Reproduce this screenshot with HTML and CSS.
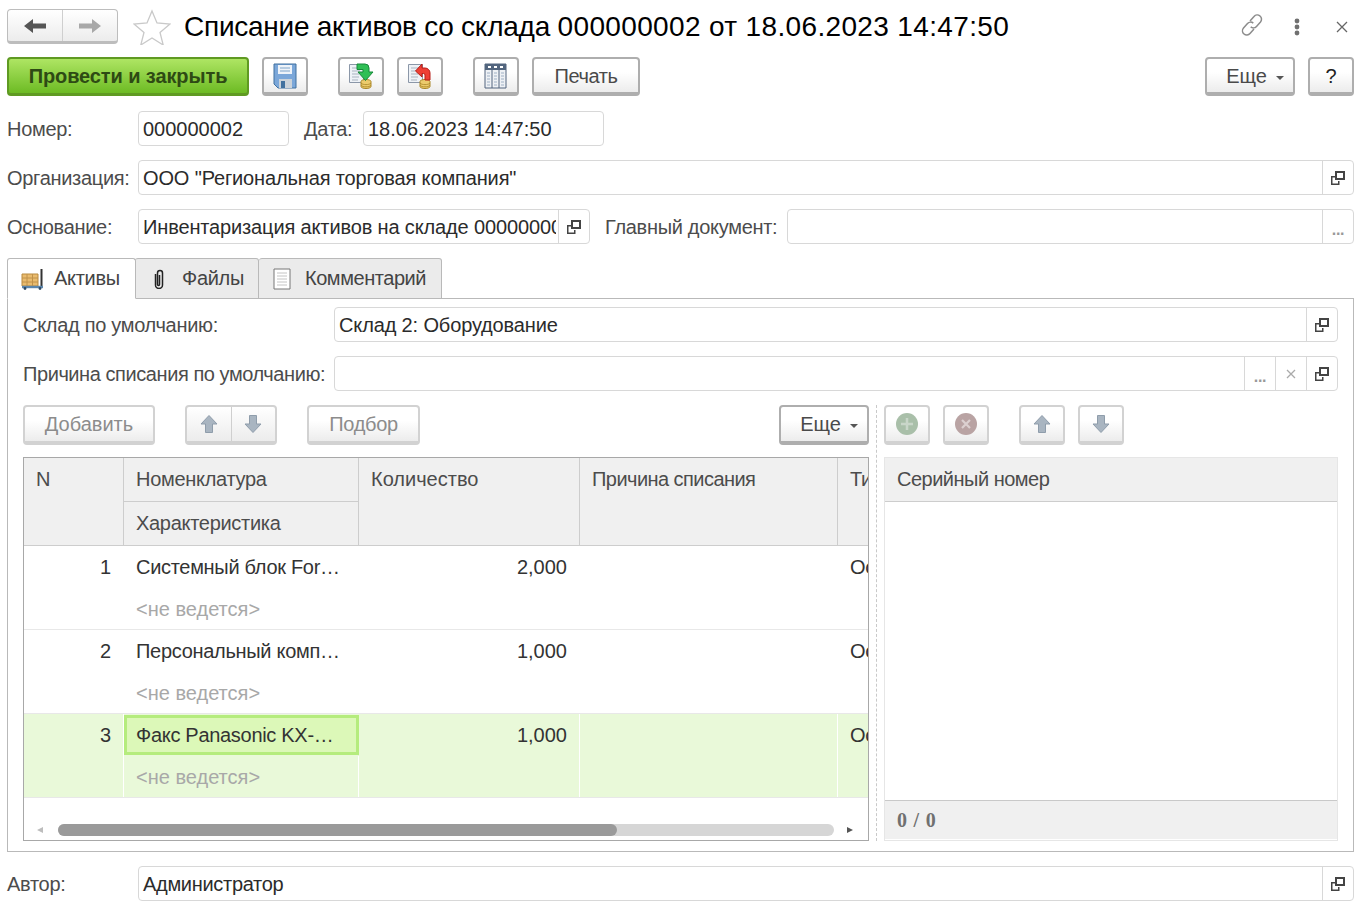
FILE: index.html
```html
<!DOCTYPE html>
<html lang="ru">
<head>
    <meta charset="UTF-8">
    <title>Списание активов со склада</title>
    <link rel="stylesheet" href="styles.css">
</head>
<body>
    <svg class="sprites" width="0" height="0">
        <symbol id="open" viewBox="0 0 16 16">
            <path d="M6 2h8v7H6z" fill="none" stroke="#444" stroke-width="2"/>
            <path d="M1 6h4v1.600H2.500V13.500H8V11h1.500v4H1z" fill="#444"/>
        </symbol>
        <symbol id="up" viewBox="0 0 20 20">
            <path d="M10 1.500 18 10h-4.500v8.500h-7V10H2z" fill="#a9b5c1" stroke="#8f9dab"/>
        </symbol>
        <symbol id="down" viewBox="0 0 20 20">
            <path d="M10 18.500 18 10h-4.500V1.500h-7V10H2z" fill="#a9b5c1" stroke="#8f9dab"/>
        </symbol>
        <symbol id="doc-coins" viewBox="0 0 26 26">
            <path d="M1.500 1.500h14v18h-14z" fill="#eef2f7" stroke="#8b97a8"/>
            <path d="M4 5h8M4 8h8M4 11h7M4 14h7M4 17h6" stroke="#a9b3c0"/>
            <path d="M13 18.500c0-1.200 2.400-2 5-2s5 .8 5 2v5c0 1.200-2.400 2-5 2s-5-.8-5-2z" fill="#eccb6c" stroke="#a98526"/>
            <path d="M13 20.200c1 1 3 1.400 5 1.400s4-.4 5-1.400M13 22.400c1 1 3 1.400 5 1.400s4-.4 5-1.400" fill="none" stroke="#a98526" stroke-width=".8"/>
        </symbol>
    </svg>

    <header class="title-bar">
        <div class="btn-group nav-group">
            <span class="group-part">
                <svg width="26" height="18" viewBox="0 0 26 18"><path d="M2 9 11 2v4.500h13v5H11V16z" fill="#555"/></svg>
            </span>
            <span class="group-part">
                <svg width="26" height="18" viewBox="0 0 26 18"><path d="M24 9 15 2v4.500H2v5h13V16z" fill="#a8a8a8"/></svg>
            </span>
        </div>
        <svg class="star" width="38" height="36" viewBox="0 0 38 36"><path d="M19 2l5 12 13 1-10 8.500 3.200 12.500L19 29l-11.200 7L11 23.500 1 15l13-1z" fill="#fff" stroke="#c9c9c9" stroke-width="1.300"/></svg>
        <h1 class="doc-title"><span class="title-words">Списание активов со склада </span><span class="title-nums">000000002 от 18.06.2023 14:47:50</span></h1>
        <div class="window-tools">
            <svg class="tool-link" width="26" height="26" viewBox="0 0 26 26"><g fill="none" stroke="#8c8c8c" stroke-width="1.500"><path d="M11 9l4-4.500a4.200 4.200 0 0 1 6.500 5.500l-4 4.500a4.200 4.200 0 0 1-5.800 .4"/><path d="M15 17l-4 4.500a4.200 4.200 0 0 1-6.500-5.500l4-4.500a4.200 4.200 0 0 1 5.800 -.4"/></g></svg>
            <svg class="tool-dots" width="8" height="18" viewBox="0 0 8 18"><circle cx="4" cy="3" r="2.400" fill="#707070"/><circle cx="4" cy="9" r="2.400" fill="#707070"/><circle cx="4" cy="15" r="2.400" fill="#707070"/></svg>
            <svg width="12" height="12" viewBox="0 0 12 12"><path d="M1 1l10 10M11 1 1 11" stroke="#666" stroke-width="1.300"/></svg>
        </div>
    </header>

    <div class="toolbar">
        <button class="btn btn-green">Провести и закрыть</button>
        <button class="btn btn-icon gap-13">
            <svg width="24" height="26" viewBox="0 0 24 26"><path d="M1 1h22v24H5l-4-4z" fill="#7ba7d9" stroke="#41719f"/><path d="M5 2h14v9H5z" fill="#eef3f9"/><path d="M7 5h10M7 8h10" stroke="#7fa4c9"/><path d="M6 16h13v9H6z" fill="#cbd3da"/><path d="M8 18h4v7H8z" fill="#41719f"/></svg>
        </button>
        <button class="btn btn-icon gap-30">
            <svg width="26" height="26" viewBox="0 0 26 26"><use href="#doc-coins"/><path d="M9 1h8a4 4 0 0 1 4 4v4h4l-7.500 8.500L10 9h5V6.500H9z" fill="#2fbf55" stroke="#17893a"/></svg>
        </button>
        <button class="btn btn-icon gap-13">
            <svg width="26" height="26" viewBox="0 0 26 26"><use href="#doc-coins"/><path d="M15 1 8.500 8 15 14v-3.500h1.500a1.500 1.500 0 0 1 1.500 1.500v5h5v-7a5 5 0 0 0-5-5h-3z" fill="#ee3f35" stroke="#b81f18"/></svg>
        </button>
        <button class="btn btn-icon gap-30">
            <svg width="24" height="26" viewBox="0 0 24 26"><path d="M1 1h21v24H1z" fill="#eef1f5" stroke="#52657e"/><path d="M1 1h21v6H1z" fill="#52657e"/><path d="M4 3h3v2H4zM10 3h3v2h-3zM16 3h3v2h-3z" fill="#fff"/><path d="M8 7v18M15 7v18" stroke="#52657e"/><path d="M3 10h3M3 13h3M3 16h3M3 19h3M3 22h3M10 10h3M10 13h3M10 16h3M10 19h3M10 22h3M17 10h3M17 13h3M17 16h3M17 19h3M17 22h3" stroke="#9fb0c4"/></svg>
        </button>
        <button class="btn print-btn gap-13">Печать</button>
        <button class="btn more-btn push-right">Еще <i class="caret"></i></button>
        <button class="btn help-btn gap-13">?</button>
    </div>

    <div class="form-row">
        <label class="lbl lbl-first">Номер:</label>
        <div class="field num-field"><span class="val digits">000000002</span></div>
        <label class="lbl date-lbl">Дата:</label>
        <div class="field date-field"><span class="val digits">18.06.2023 14:47:50</span></div>
    </div>

    <div class="form-row">
        <label class="lbl lbl-first">Организация:</label>
        <div class="field grow">
            <span class="val ls-wide">ООО "Региональная торговая компания"</span>
            <span class="fbtn"><svg width="16" height="16"><use href="#open"/></svg></span>
        </div>
    </div>

    <div class="form-row">
        <label class="lbl lbl-first">Основание:</label>
        <div class="field base-field">
            <span class="val ls-wide">Инвентаризация активов на складе 000000002 от 18.06.2023</span>
            <span class="fbtn"><svg width="16" height="16"><use href="#open"/></svg></span>
        </div>
        <label class="lbl main-lbl">Главный документ:</label>
        <div class="field grow">
            <span class="val"></span>
            <span class="fbtn dots">...</span>
        </div>
    </div>

    <nav class="tabs">
        <div class="tab tab-active">
            <svg width="24" height="22" viewBox="0 0 24 22"><path d="M1 6h16v12H1z" fill="#e9bb6e" stroke="#b98a3e"/><path d="M6 6v12M11.500 6v12M1 10h16M1 14h16" stroke="#c0924a"/><path d="M20.500 1v17" stroke="#333" stroke-width="2"/><path d="M1 19h21" stroke="#5b86ad" stroke-width="2.400"/><circle cx="4" cy="20.500" r="1.400" fill="#2d4a66"/><circle cx="19" cy="20.500" r="1.400" fill="#2d4a66"/></svg>
            Активы
        </div>
        <div class="tab">
            <svg width="10" height="20" viewBox="0 0 10 20"><path d="M5.500 6v9.500a1 1 0 0 1-2 0V4a2.500 2.500 0 0 1 5 0v12a3.500 3.500 0 0 1-7 0V5" fill="none" stroke="#222" stroke-width="1.500"/></svg>
            Файлы
        </div>
        <div class="tab">
            <svg width="18" height="22" viewBox="0 0 18 22"><path d="M1 1h16v20H1z" fill="#fff" stroke="#777"/><path d="M4 5h10M4 8h10M4 11h10M4 14h10M4 17h10" stroke="#c4c4c4"/></svg>
            Комментарий
        </div>
    </nav>

    <section class="panel">
        <div class="panel-row">
            <label class="lbl lbl-wide">Склад по умолчанию:</label>
            <div class="field grow">
                <span class="val ls-wide">Склад 2: Оборудование</span>
                <span class="fbtn"><svg width="16" height="16"><use href="#open"/></svg></span>
            </div>
        </div>
        <div class="panel-row">
            <label class="lbl lbl-wide reason-lbl">Причина списания по умолчанию:</label>
            <div class="field grow">
                <span class="val"></span>
                <span class="fbtn dots">...</span>
                <span class="fbtn clear">
                    <svg width="10" height="10" viewBox="0 0 10 10"><path d="M1 1l8 8M9 1 1 9" stroke="#aaa" stroke-width="1.300"/></svg>
                </span>
                <span class="fbtn"><svg width="16" height="16"><use href="#open"/></svg></span>
            </div>
        </div>

        <div class="split">
            <div class="left-col">
                <div class="cmd-bar">
                    <button class="btn btn-off add-btn">Добавить</button>
                    <div class="btn-group btn-group-off updown">
                        <span class="group-part"><svg width="20" height="20"><use href="#up"/></svg></span>
                        <span class="group-part"><svg width="20" height="20"><use href="#down"/></svg></span>
                    </div>
                    <button class="btn btn-off pick-btn">Подбор</button>
                    <button class="btn more-btn push-right">Еще <i class="caret"></i></button>
                </div>

                <div class="grid">
                    <div class="g-row g-head">
                        <div class="cell span-2">N</div>
                        <div class="cell">Номенклатура</div>
                        <div class="cell span-2 col-qty digits">Количество</div>
                        <div class="cell span-2 col-reason ls-tight">Причина списания</div>
                        <div class="cell span-2 col-type">Тип</div>
                        <div class="cell">Характеристика</div>
                    </div>
                    <div class="g-row">
                        <div class="cell span-2 num digits">1</div>
                        <div class="cell">Системный блок For…</div>
                        <div class="cell span-2 num col-qty digits">2,000</div>
                        <div class="cell span-2 col-reason"></div>
                        <div class="cell span-2 col-type">Основное</div>
                        <div class="cell muted">&lt;не ведется&gt;</div>
                    </div>
                    <div class="g-row">
                        <div class="cell span-2 num digits">2</div>
                        <div class="cell">Персональный комп…</div>
                        <div class="cell span-2 num col-qty digits">1,000</div>
                        <div class="cell span-2 col-reason"></div>
                        <div class="cell span-2 col-type">Основное</div>
                        <div class="cell muted">&lt;не ведется&gt;</div>
                    </div>
                    <div class="g-row g-selected">
                        <div class="cell span-2 num digits">3</div>
                        <div class="cell cell-current">Факс Panasonic KX-…</div>
                        <div class="cell span-2 num col-qty digits">1,000</div>
                        <div class="cell span-2 col-reason"></div>
                        <div class="cell span-2 col-type">Основное</div>
                        <div class="cell muted">&lt;не ведется&gt;</div>
                    </div>
                    <div class="hscroll">
                        <i class="arrow-left"></i>
                        <div class="track"><div class="thumb"></div></div>
                        <i class="arrow-right"></i>
                    </div>
                </div>
            </div>

            <div class="divider"></div>

            <div class="right-col">
                <div class="cmd-bar">
                    <button class="btn btn-off btn-icon">
                        <svg width="24" height="24" viewBox="0 0 24 24"><circle cx="12" cy="12" r="11" fill="#a9bfa9"/><path d="M12 6v12M6 12h12" stroke="#c9d6c9" stroke-width="2.500"/></svg>
                    </button>
                    <button class="btn btn-off btn-icon gap-13">
                        <svg width="24" height="24" viewBox="0 0 24 24"><circle cx="12" cy="12" r="11" fill="#b9a3a3"/><path d="M8 8l8 8M16 8l-8 8" stroke="#dcd0d0" stroke-width="2.200"/></svg>
                    </button>
                    <button class="btn btn-off btn-icon gap-30"><svg width="20" height="20"><use href="#up"/></svg></button>
                    <button class="btn btn-off btn-icon gap-13"><svg width="20" height="20"><use href="#down"/></svg></button>
                </div>

                <div class="serials">
                    <div class="serials-head">Серийный номер</div>
                    <div class="serials-body"></div>
                    <div class="serials-foot"><span>0 / 0</span></div>
                </div>
            </div>
        </div>
    </section>

    <div class="form-row author-row">
        <label class="lbl lbl-first">Автор:</label>
        <div class="field grow">
            <span class="val">Администратор</span>
            <span class="fbtn"><svg width="16" height="16"><use href="#open"/></svg></span>
        </div>
    </div>
</body>
</html>
```

FILE: styles.css
```css
* {
    box-sizing: border-box;
}

html, body {
    height: 100%;
}

body {
    margin: 0;
    padding: 9px 15px 0 7px;
    background: #fff;
    color: #333;
    font-family: "Liberation Sans", Arial, sans-serif;
    font-size: 20px;
    letter-spacing: -0.3px;
    overflow: hidden;
}

.sprites {
    display: block;
    height: 0;
}

.digits {
    letter-spacing: 0;
}

.ls-wide {
    letter-spacing: -0.14px;
}

.ls-tight {
    letter-spacing: -0.55px;
}

/* шапка */
.title-bar {
    display: flex;
    align-items: center;
    height: 35px;
}

.btn-group {
    display: flex;
    border: 1px solid #bdbdbd;
    border-bottom: 3px solid #bdbdbd;
    border-radius: 4px;
    background: linear-gradient(#fff, #ececec);
}

.group-part {
    display: flex;
    align-items: center;
    justify-content: center;
    flex: 1;
}

.group-part + .group-part {
    border-left: 1px solid #cfcfcf;
}

.nav-group {
    width: 111px;
    height: 35px;
}

.star {
    margin-left: 15px;
}

.doc-title {
    margin: 0 0 0 13px;
    font-size: 28px;
    font-weight: normal;
    color: #000;
    white-space: nowrap;
}

.title-words {
    letter-spacing: -0.25px;
}

.title-nums {
    letter-spacing: 0.35px;
}

.window-tools {
    display: flex;
    align-items: center;
    margin-left: auto;
    padding-right: 6px;
}

.tool-link {
    margin: 0 28px 4px 0;
}

.tool-dots {
    margin: 0 35px 0 0;
}

/* кнопки */
.toolbar {
    display: flex;
    margin-top: 13px;
    height: 39px;
}

.btn {
    display: flex;
    align-items: center;
    justify-content: center;
    height: 39px;
    padding: 0;
    border: 2px solid #aeaeae;
    border-bottom-width: 4px;
    border-radius: 4px;
    background: linear-gradient(#fff 40%, #ececec);
    color: #4a4a4a;
    font: 20px "Liberation Sans", Arial, sans-serif;
}

.toolbar .btn {
    padding-top: 1px;
}

.toolbar .btn-green {
    width: 242px;
    padding-top: 0;
    border: 2px solid #5f9a22;
    border-bottom-width: 3px;
    background: linear-gradient(#aee563, #6dbb24);
    color: #2e4a14;
    font-weight: bold;
    letter-spacing: -0.1px;
}

.btn-icon {
    width: 46px;
}

.gap-13 {
    margin-left: 13px;
}

.gap-30 {
    margin-left: 30px;
}

.print-btn {
    width: 108px;
    letter-spacing: -0.4px;
}

.more-btn,
.toolbar .more-btn {
    width: 90px;
    gap: 9px;
    padding-left: 10px;
}

.help-btn {
    width: 46px;
    color: #222;
}

.push-right {
    margin-left: auto;
}

.caret {
    display: block;
    width: 0;
    height: 0;
    margin-top: 3px;
    border-top: 4px solid #555;
    border-left: 4px solid transparent;
    border-right: 4px solid transparent;
}

.btn-off {
    border-color: #d2d2d2;
    color: #8c8c8c;
}

.btn-group-off {
    border: 2px solid #d2d2d2;
    border-bottom-width: 4px;
}

/* поля */
.form-row {
    display: flex;
    align-items: center;
    height: 35px;
    margin-bottom: 14px;
}

.toolbar + .form-row {
    margin-top: 15px;
}

.lbl {
    padding-top: 1px;
    color: #4c4c4c;
    white-space: nowrap;
}

.lbl-first {
    width: 131px;
    flex: none;
}

.date-lbl {
    width: 59px;
    margin-left: 15px;
}

.main-lbl {
    width: 182px;
    margin-left: 15px;
}

.lbl-wide {
    width: 311px;
    flex: none;
}

.reason-lbl {
    letter-spacing: -0.43px;
}

.field {
    display: flex;
    align-items: stretch;
    height: 35px;
    border: 1px solid #d8d8d8;
    border-radius: 4px;
    background: #fff;
    color: #2b2b2b;
}

.grow {
    flex: 1;
}

.num-field {
    width: 151px;
}

.date-field {
    width: 241px;
}

.base-field {
    width: 452px;
}

.val {
    flex: 1;
    min-width: 0;
    margin-right: 2px;
    padding: 0 0 0 4px;
    overflow: hidden;
    line-height: 35px;
    white-space: nowrap;
}

.fbtn {
    display: flex;
    align-items: center;
    justify-content: center;
    width: 31px;
    flex: none;
    border-left: 1px solid #d8d8d8;
}

.dots {
    align-items: flex-end;
    color: #999;
    font-size: 16px;
    line-height: 26px;
    font-weight: bold;
}

.clear {
    width: 31px;
}

/* вкладки */
.tabs {
    display: flex;
    height: 41px;
    margin-bottom: -1px;
}

.tab {
    display: flex;
    align-items: center;
    border: 1px solid #b9b9b9;
    border-left-width: 0;
    border-radius: 3px 3px 0 0;
    background: #ebebeb;
    color: #444;
}

.tab:nth-child(1) {
    width: 129px;
    padding-left: 13px;
    gap: 9px;
    border-left-width: 1px;
}

.tab:nth-child(2) {
    width: 124px;
    padding-left: 19px;
    gap: 18px;
}

.tab:nth-child(3) {
    width: 183px;
    padding-left: 14px;
    gap: 14px;
    letter-spacing: -0.45px;
}

.tab-active {
    position: relative;
    z-index: 1;
    margin-right: -1px;
    background: #fff;
    border-bottom-color: #fff;
}

.panel {
    height: 554px;
    padding: 8px 15px 9px;
    border: 1px solid #b9b9b9;
}

.panel-row {
    display: flex;
    align-items: center;
    height: 35px;
    margin-bottom: 14px;
}

.split {
    display: flex;
    height: 436px;
}

.left-col {
    display: flex;
    flex-direction: column;
    width: 846px;
}

.divider {
    width: 1px;
    margin: 0 7px;
    border-left: 1px dashed #c9c9c9;
}

.right-col {
    display: flex;
    flex-direction: column;
    flex: 1;
}

.cmd-bar {
    display: flex;
    height: 40px;
    margin-bottom: 12px;
    flex: none;
}

.cmd-bar .btn {
    height: 40px;
}

.add-btn {
    width: 132px;
}

.updown {
    width: 92px;
    height: 40px;
    margin-left: 30px;
}

.pick-btn {
    width: 113px;
    margin-left: 30px;
    letter-spacing: -0.3px;
}

/* таблица */
.grid {
    display: flex;
    flex-direction: column;
    flex: 1;
    border: 1px solid #a8a8a8;
    overflow: hidden;
}

.g-row {
    display: grid;
    grid-template-columns: 100px 235px 221px 258px 30px;
    grid-template-rows: 42px 41px;
    flex: none;
    border-bottom: 1px solid #e8e8e8;
}

.g-head {
    grid-template-rows: 44px 44px;
    background: #f0f0f0;
    border-bottom: 0;
}

.cell {
    padding: 0 12px;
    overflow: hidden;
    color: #333;
    line-height: 43px;
    white-space: nowrap;
}

.span-2 {
    grid-row: span 2;
}

.g-head .cell {
    border-right: 1px solid #cdcdcd;
    border-bottom: 1px solid #cdcdcd;
    color: #4c4c4c;
}

.g-head .col-type {
    border-right: 0;
}

.num {
    padding-right: 13px;
    text-align: right;
}

.col-type {
    padding-right: 0;
}

.muted,
.g-selected .muted {
    color: #a8a8a8;
    letter-spacing: 0;
}

.g-selected {
    background: #e9f9d9;
}

.g-selected .cell {
    border-right: 1px solid #fff;
}

.g-selected .num {
    padding-right: 12px;
}

.g-selected .col-type {
    border-right: 0;
}

.g-selected .cell-current {
    height: 40px;
    margin-top: 1px;
    padding: 0 9px;
    border: 3px solid #b5ec7d;
    background: #dcf8b8;
    line-height: 34px;
}

.hscroll {
    display: flex;
    align-items: center;
    margin-top: auto;
    height: 12px;
    margin-bottom: 4px;
    padding: 0 15px 0 13px;
}

.track {
    flex: 1;
    height: 12px;
    margin: 0 13px 0 15px;
    border-radius: 6px;
    background: #d6d6d6;
}

.thumb {
    width: 559px;
    height: 12px;
    border-radius: 6px;
    background: #9a9a9a;
}

.arrow-left,
.arrow-right {
    display: block;
    width: 0;
    height: 0;
    border-top: 3px solid transparent;
    border-bottom: 3px solid transparent;
}

.arrow-left {
    border-right: 6px solid #bdbdbd;
}

.arrow-right {
    border-left: 6px solid #555;
}

/* серийные номера */
.serials {
    display: flex;
    flex-direction: column;
    flex: 1;
    border: 1px solid #e6e6e6;
}

.serials-head {
    height: 44px;
    padding-left: 12px;
    border-bottom: 1px solid #cdcdcd;
    background: #f0f0f0;
    color: #4c4c4c;
    letter-spacing: -0.5px;
    line-height: 43px;
}

.serials-body {
    flex: 1;
}

.serials-foot {
    height: 40px;
    border-top: 1px solid #c9c9c9;
    padding-bottom: 1px;
    background: #fff;
}

.serials-foot span {
    display: block;
    height: 38px;
    padding-left: 12px;
    background: #f0f0f0;
    color: #707070;
    font-family: "Liberation Serif", serif;
    font-weight: bold;
    letter-spacing: 0.8px;
    line-height: 38px;
}

.author-row {
    margin: 14px 0 0;
}
```
